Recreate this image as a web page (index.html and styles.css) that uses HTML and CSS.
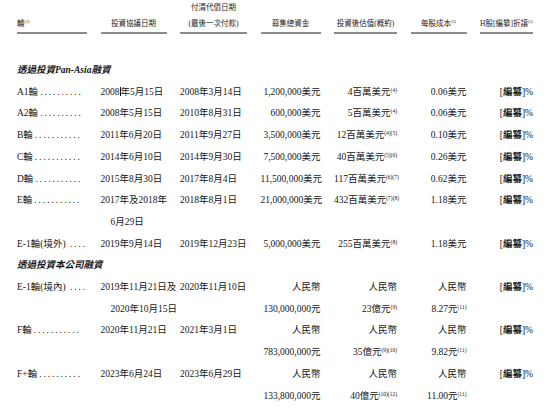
FILE: index.html
```html
<!DOCTYPE html>
<html lang="zh-Hant">
<head>
<meta charset="utf-8">
<title>融資輪次</title>
<link rel="stylesheet" href="styles.css">
</head>
<body>
<div class="sheet">
  <div class="grid head">
    <div class="h left">輪<sup>(1)</sup></div>
    <div class="h">投資協議日期</div>
    <div class="h">付清代價日期<br>(最後一次付款)</div>
    <div class="h">募集總資金</div>
    <div class="h">投資後估值(概約)</div>
    <div class="h">每股成本<sup>(2)</sup></div>
    <div class="h">H股[編纂]折讓<sup>(3)</sup></div>
  </div>

  <div class="grid body">
    <div class="sec">透過投資Pan-Asia融資</div>

    <div class="lab">A1輪<span class="dots">..........</span></div>
    <div class="d">2008<span class="caret"></span>年5月15日</div>
    <div class="d">2008年3月14日</div>
    <div class="r">1,200,000美元</div>
    <div class="r">4百萬美元<sup>(4)</sup></div>
    <div class="r">0.06美元</div>
    <div class="r">[<b>編纂</b>]%</div>

    <div class="lab">A2輪<span class="dots">..........</span></div>
    <div class="d">2008年5月15日</div>
    <div class="d">2010年8月31日</div>
    <div class="r">600,000美元</div>
    <div class="r">5百萬美元<sup>(4)</sup></div>
    <div class="r">0.06美元</div>
    <div class="r">[<b>編纂</b>]%</div>

    <div class="lab">B輪<span class="dots">...........</span></div>
    <div class="d">2011年6月20日</div>
    <div class="d">2011年9月27日</div>
    <div class="r">3,500,000美元</div>
    <div class="r">12百萬美元<sup>(4)(5)</sup></div>
    <div class="r">0.10美元</div>
    <div class="r">[<b>編纂</b>]%</div>

    <div class="lab">C輪<span class="dots">...........</span></div>
    <div class="d">2014年6月10日</div>
    <div class="d">2014年9月30日</div>
    <div class="r">7,500,000美元</div>
    <div class="r">40百萬美元<sup>(5)(6)</sup></div>
    <div class="r">0.26美元</div>
    <div class="r">[<b>編纂</b>]%</div>

    <div class="lab">D輪<span class="dots">...........</span></div>
    <div class="d">2015年8月30日</div>
    <div class="d">2017年8月4日</div>
    <div class="r">11,500,000美元</div>
    <div class="r">117百萬美元<sup>(6)(7)</sup></div>
    <div class="r">0.62美元</div>
    <div class="r">[<b>編纂</b>]%</div>

    <div class="lab">E輪<span class="dots">...........</span></div>
    <div class="d">2017年及2018年<span class="cont">6月29日</span></div>
    <div class="d">2018年8月1日</div>
    <div class="r">21,000,000美元</div>
    <div class="r">432百萬美元<sup>(7)(8)</sup></div>
    <div class="r">1.18美元</div>
    <div class="r">[<b>編纂</b>]%</div>

    <div class="lab">E-1輪(境外) <span class="dots">....</span></div>
    <div class="d">2019年9月14日</div>
    <div class="d">2019年12月23日</div>
    <div class="r">5,000,000美元</div>
    <div class="r">255百萬美元<sup>(8)</sup></div>
    <div class="r">1.18美元</div>
    <div class="r">[<b>編纂</b>]%</div>

    <div class="sec">透過投資本公司融資</div>

    <div class="lab">E-1輪(境內) <span class="dots">....</span></div>
    <div class="d">2019年11月21日及<span class="cont">2020年10月15日</span></div>
    <div class="d">2020年11月10日</div>
    <div class="r">人民幣<br>130,000,000元</div>
    <div class="r">人民幣<br>23億元<sup>(9)</sup></div>
    <div class="r">人民幣<br>8.27元<sup>(11)</sup></div>
    <div class="r">[<b>編纂</b>]%</div>

    <div class="lab">F輪<span class="dots">...........</span></div>
    <div class="d">2020年11月21日</div>
    <div class="d">2021年3月1日</div>
    <div class="r">人民幣<br>783,000,000元</div>
    <div class="r">人民幣<br>35億元<sup>(9)(10)</sup></div>
    <div class="r">人民幣<br>9.82元<sup>(11)</sup></div>
    <div class="r">[<b>編纂</b>]%</div>

    <div class="lab">F+輪<span class="dots">..........</span></div>
    <div class="d">2023年6月24日</div>
    <div class="d">2023年6月29日</div>
    <div class="r">人民幣<br>133,800,000元</div>
    <div class="r">人民幣<br>40億元<sup>(10)(12)</sup></div>
    <div class="r">人民幣<br>11.00元<sup>(11)</sup></div>
    <div class="r">[<b>編纂</b>]%</div>
  </div>
</div>
</body>
</html>
```

FILE: styles.css
```css
html, body {
  margin: 0;
  padding: 0;
  background: #ffffff;
}

body {
  color: #151515;
  font-family: "Liberation Serif", "Noto Sans CJK TC", serif;
}

.sheet {
  width: 550px;
  height: 419px;
  overflow: hidden;
}

.grid {
  display: grid;
  grid-template-columns: 70px 66px 67px 60px 63px 56px 53px;
  column-gap: 13.5px;
  padding-left: 17px;
}

sup {
  font-size: 0.58em;
  line-height: 0;
  vertical-align: 0.6em;
}

/* header */
.head {
  align-items: end;
  font-size: 7.5px;
  line-height: 16px;
  color: #222222;
}

.h {
  text-align: center;
  white-space: nowrap;
  border-bottom: 2px solid #8c8c8c;
}

.h.left {
  text-align: left;
}

/* body */
.body {
  margin-top: 26px;
  font-size: 9.5px;
  line-height: 21.7px;
}

.sec {
  grid-column: 1 / -1;
  font-weight: bold;
  font-style: italic;
}

.lab {
  white-space: nowrap;
}

.dots {
  letter-spacing: 1.9px;
  margin-left: 2px;
}

.d {
  white-space: nowrap;
}

.cont {
  display: block;
  padding-left: 10px;
}

.r {
  text-align: right;
  white-space: nowrap;
}

.r b {
  font-weight: bold;
}

.caret {
  display: inline-block;
  width: 1px;
  height: 9px;
  background: #111;
  vertical-align: -1px;
}
```
